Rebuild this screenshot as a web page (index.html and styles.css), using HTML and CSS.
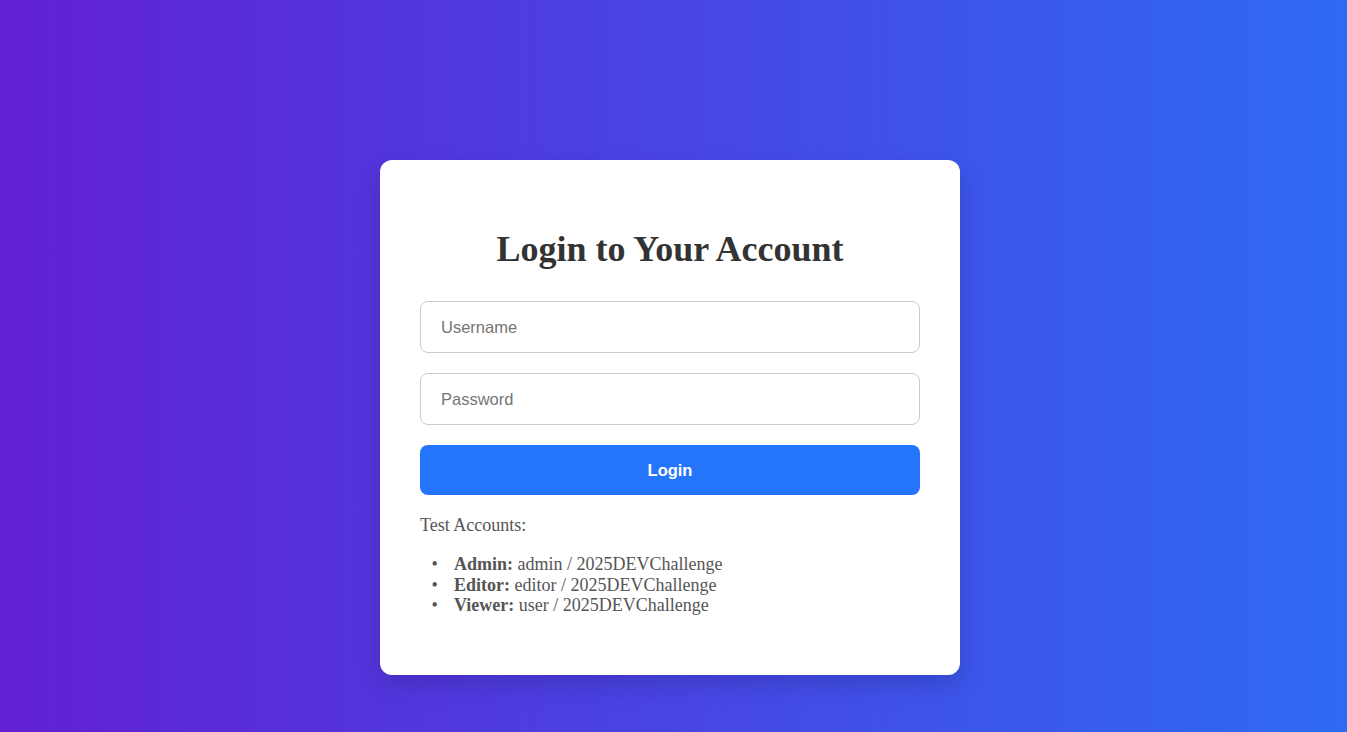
FILE: index.html
```html
<!DOCTYPE html>
<html lang="en">
<head>
<meta charset="utf-8">
<title>Login</title>
<link rel="stylesheet" href="styles.css">
</head>
<body>
<main class="page">
  <div class="card">
    <h1 class="title">Login to Your Account</h1>
    <form class="form">
      <input class="field" type="text" placeholder="Username">
      <input class="field" type="password" placeholder="Password">
      <button class="btn" type="button">Login</button>
    </form>
    <p class="note">Test Accounts:</p>
    <ul class="accounts">
      <li><strong>Admin:</strong> admin / 2025DEVChallenge</li>
      <li><strong>Editor:</strong> editor / 2025DEVChallenge</li>
      <li><strong>Viewer:</strong> user / 2025DEVChallenge</li>
    </ul>
  </div>
</main>
</body>
</html>
```

FILE: styles.css
```css
html, body {
  margin: 0;
  padding: 0;
  height: 100%;
}
body {
  background: linear-gradient(to right, #6220d4, #2e6af4);
  font-family: "Liberation Serif", "Times New Roman", serif;
  overflow: hidden;
}
.page {
  display: flex;
  justify-content: center;
  align-items: flex-start;
  padding: 160px 7px 0 0;
}
.card {
  box-sizing: border-box;
  width: 580px;
  height: 515px;
  background: #fff;
  border-radius: 12px;
  padding: 40px;
  box-shadow: 0 10px 25px rgba(0, 0, 0, 0.15);
}
.title {
  margin: 29px 0 31px;
  text-align: center;
  font-size: 36px;
  font-weight: bold;
  color: #333;
  line-height: 1.15;
}
.form {
  display: flex;
  flex-direction: column;
  gap: 20px;
}
.field {
  box-sizing: border-box;
  width: 100%;
  height: 52px;
  margin: 0;
  padding: 0 20px;
  border: 1px solid #ccc;
  border-radius: 8px;
  font-family: "Liberation Sans", Arial, sans-serif;
  font-size: 16.5px;
  color: #333;
  outline: none;
}
.field::placeholder {
  color: #757575;
}
.btn {
  box-sizing: border-box;
  height: 50px;
  width: 100%;
  border: none;
  border-radius: 8px;
  background: #2575fc;
  color: #fff;
  font-family: "Liberation Sans", Arial, sans-serif;
  font-size: 16.5px;
  font-weight: bold;
  cursor: pointer;
}
.note {
  margin: 20px 0 18px;
  font-size: 18px;
  color: #555;
  line-height: 1.15;
}
.accounts {
  margin: 18px 0;
  padding-left: 34px;
  font-size: 18px;
  color: #555;
  line-height: 1.15;
}
.accounts li::marker {
  content: "\2022\2002\2009\2009";
}
```
